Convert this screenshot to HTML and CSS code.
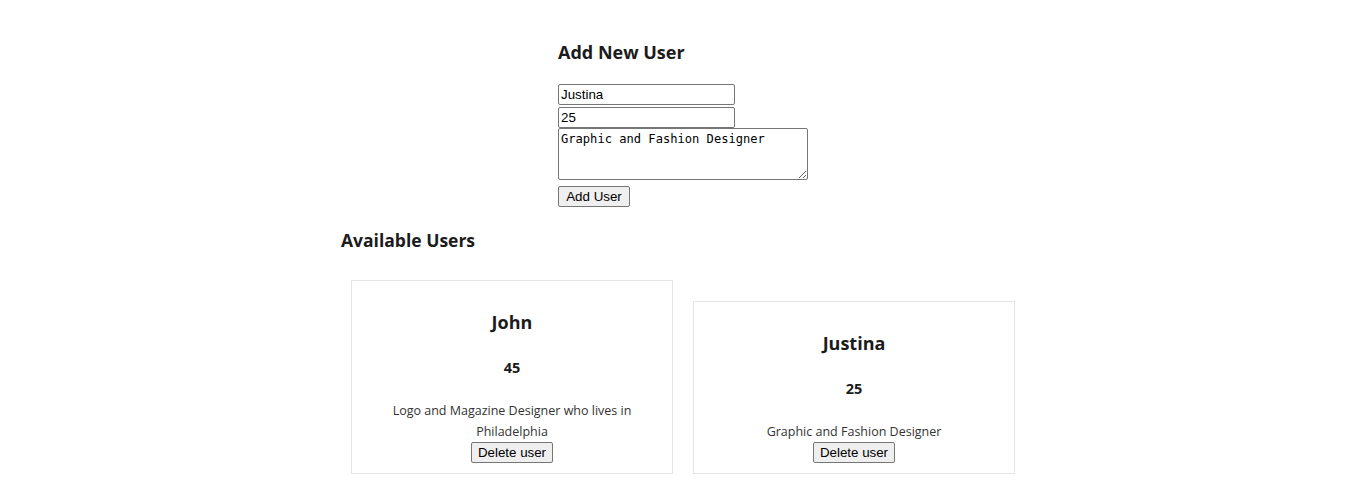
FILE: index.html
```html
<!DOCTYPE html>
<html>
<head>
<meta charset="utf-8">
<link rel="stylesheet" href="styles.css">
</head>
<body>
<div class="page">
  <section class="add-form">
    <h3 class="form-title">Add New User</h3>
    <input class="field" type="text" value="Justina">
    <input class="field field-age" type="text" value="25">
    <textarea class="bio">Graphic and Fashion Designer</textarea>
    <button class="btn btn-add">Add User</button>
  </section>
  <h3 class="list-title">Available Users</h3>
  <div class="cards">
    <div class="card">
      <h3 class="card-name">John</h3>
      <h4 class="card-age">45</h4>
      <p class="card-desc">Logo and Magazine Designer who lives in Philadelphia</p>
      <button class="btn btn-delete">Delete user</button>
    </div>
    <div class="card">
      <h3 class="card-name">Justina</h3>
      <h4 class="card-age">25</h4>
      <p class="card-desc">Graphic and Fashion Designer</p>
      <button class="btn btn-delete">Delete user</button>
    </div>
  </div>
</div>
</body>
</html>
```

FILE: styles.css
```css
body {
  margin: 0;
  background: #ffffff;
  color: #1b1b1b;
  font-family: "Open Sans", "Noto Sans", sans-serif;
}
.page {
  width: 684px;
  margin: 0 auto;
}
.add-form {
  width: 250px;
  margin: 0 auto;
  display: flex;
  flex-direction: column;
  align-items: flex-start;
}
.form-title {
  margin: 40px 0 19px;
  font-size: 18px;
  line-height: 25px;
  font-weight: 700;
}
.field {
  box-sizing: border-box;
  width: 177px;
  height: 21px;
  margin: 0 0 2px;
  padding: 1px 2px;
  border: 1px solid #767676;
  border-radius: 2px;
  font-family: "Liberation Sans", Arial, sans-serif;
  font-size: 13.33px;
  color: #000;
  background: #fff;
}
.field-age {
  margin-bottom: 0;
}
.bio {
  box-sizing: border-box;
  width: 250px;
  height: 52px;
  margin: 0;
  padding: 3px 2px 2px;
  border: 1px solid #767676;
  border-radius: 2px;
  font-family: "DejaVu Sans Mono", "Liberation Mono", monospace;
  font-size: 12.1px;
  color: #000;
  resize: both;
}
.btn {
  box-sizing: border-box;
  height: 21px;
  padding: 1px 6px;
  border: 1px solid #767676;
  border-radius: 2px;
  background: #efefef;
  color: #000;
  font-family: "Liberation Sans", Arial, sans-serif;
  font-size: 13.33px;
  line-height: 17px;
}
.btn-add {
  margin-top: 6px;
  width: 72px;
}
.btn-delete {
  display: block;
  margin: 0 auto;
}
.list-title {
  margin: 21px 0 27px;
  font-size: 17.5px;
  line-height: 25px;
  font-weight: 700;
}
.cards {
  display: flex;
  align-items: flex-end;
}
.card {
  box-sizing: border-box;
  width: 322px;
  margin: 0 10px;
  padding: 10px 10px 10px;
  border: 1px solid #e4e4e4;
  text-align: center;
}
.card-name {
  margin: 19px 0 0;
  font-size: 18px;
  line-height: 25px;
  font-weight: 700;
}
.card-age {
  margin: 22px 0 0;
  font-size: 14.5px;
  line-height: 21px;
  font-weight: 700;
}
.card-desc {
  margin: 22px 20px 0;
  font-size: 12.5px;
  line-height: 21px;
  color: #333;
}
```
